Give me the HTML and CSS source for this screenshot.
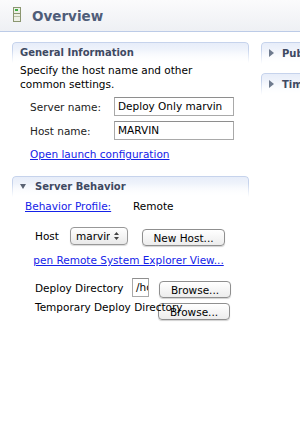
FILE: index.html
```html
<!DOCTYPE html>
<html lang="en">

<head>
  <meta charset="UTF-8" />
  <title>Overview</title>
  <link rel="stylesheet" href="styles.css">
</head>

<body>

  <div class="header">
    <svg class="server-icon" width="8" height="15" viewBox="0 0 8 15">
      <rect x="0.5" y="0.5" width="7" height="14" fill="#eef0e6" stroke="#8b9670" />
      <rect x="2" y="2" width="3" height="2" fill="#3cb043" />
      <line x1="1" y1="6.5" x2="7" y2="6.5" stroke="#8b9670" />
      <line x1="1" y1="9.5" x2="7" y2="9.5" stroke="#b8bfa6" />
    </svg>
    <h1 class="title">Overview</h1>
  </div>

  <div class="page">
    <div class="left">

      <div class="section">
        <div class="sec-head">General Information</div>
        <p class="intro">Specify the host name and other common settings.</p>
        <div class="form-row">
          <label class="row-label">Server name:</label>
          <div class="textbox">Deploy Only marvin</div>
        </div>
        <div class="form-row">
          <label class="row-label">Host name:</label>
          <div class="textbox">MARVIN</div>
        </div>
        <a class="link launch" href="#">Open launch configuration</a>
      </div>

      <div class="section behavior">
        <div class="sec-head"><span class="tri-down"></span>Server Behavior</div>
        <div class="profile-row">
          <a class="link profile-link" href="#">Behavior Profile:</a>
          <span>Remote</span>
        </div>
        <div class="host-row">
          <span class="host-label">Host</span>
          <div class="popup"><span class="popup-text">marvin</span><span class="popup-arrows">
              <svg width="5" height="8" viewBox="0 0 5 8">
                <path d="M0 3 L2.5 0 L5 3 Z M0 5 L2.5 8 L5 5 Z" fill="#444" />
              </svg></span></div>
          <button class="mac-btn new-host">New Host...</button>
        </div>
        <div class="rse-clip">
          <a class="link rse-link" href="#">Open Remote System Explorer View...</a>
        </div>
        <div class="dir-row">
          <span class="dir-label">Deploy Directory</span>
          <div class="textbox small">/home</div>
          <button class="mac-btn browse">Browse...</button>
        </div>
        <div class="dir-row temp">
          <span class="dir-label">Temporary Deploy Directory</span>
          <button class="mac-btn browse">Browse...</button>
        </div>
      </div>

    </div>

    <div class="right">
      <div class="section side">
        <div class="sec-head"><span class="tri-right"></span>Publishing</div>
      </div>
      <div class="section side">
        <div class="sec-head"><span class="tri-right"></span>Timeouts</div>
      </div>
    </div>
  </div>

</body>

</html>
```

FILE: styles.css
```css
body {
  margin: 0;
  font-family: "DejaVu Sans", sans-serif;
  font-size: 10.5px;
  color: #000;
  background: #fff;
  width: 300px;
  height: 430px;
  overflow: hidden;
}

.header {
  height: 31px;
  border-bottom: 1px solid #bccbe7;
  background: linear-gradient(#fbfbfc, #eef0f4);
  display: flex;
  align-items: center;
  padding-left: 13px;
}

.server-icon {
  margin-top: -2px;
}

.title {
  margin: 0 0 0 11px;
  font-size: 13.5px;
  font-weight: bold;
  color: #4f5d79;
}

.page {
  display: flex;
  padding: 10px 0 0 12px;
}

.left {
  width: 237px;
  flex-shrink: 0;
}

.right {
  margin-left: 12px;
  flex: 1;
  min-width: 0;
}

.section {
  display: flex;
  flex-direction: column;
}

.sec-head {
  position: relative;
  z-index: 0;
  height: 21px;
  display: flex;
  align-items: center;
  padding-left: 8px;
  font-size: 10px;
  font-weight: bold;
  color: #3e4962;
  white-space: nowrap;
}

/* faded frame round the section title */
.sec-head::before {
  content: '';
  position: absolute;
  inset: 0;
  z-index: -1;
  border: 1px solid #c6d3ec;
  border-bottom: none;
  border-radius: 4px 4px 0 0;
  background: linear-gradient(#e7edf9, #ffffff);
  -webkit-mask-image: linear-gradient(#000 35%, transparent);
  mask-image: linear-gradient(#000 35%, transparent);
}

.intro {
  margin: 0;
  padding: 0 10px 0 8px;
  line-height: 14px;
}

.form-row {
  display: flex;
  align-items: center;
  margin-top: 5px;
  padding-left: 18px;
}

.intro+.form-row {
  margin-top: 6px;
}

.row-label {
  width: 84px;
  color: #222;
}

.textbox {
  width: 115px;
  height: 17px;
  line-height: 17px;
  padding-left: 3px;
  border: 1px solid #a9a9a9;
  border-top-color: #8e8e8e;
  white-space: nowrap;
  overflow: hidden;
}

.textbox.small {
  width: 12px;
}

.link {
  color: #1522e8;
  text-decoration: underline;
}

.launch {
  margin: 7px 0 0 18px;
  line-height: 14px;
}

.behavior {
  margin-top: 15px;
}

.tri-down {
  width: 0;
  height: 0;
  border-left: 3.5px solid transparent;
  border-right: 3.5px solid transparent;
  border-top: 5px solid #5b6373;
  margin-right: 9px;
}

.tri-right {
  width: 0;
  height: 0;
  border-top: 4px solid transparent;
  border-bottom: 4px solid transparent;
  border-left: 5px solid #6f7b8e;
  margin-right: 8px;
}

.profile-row {
  display: flex;
  margin-top: 2px;
  padding-left: 13px;
  line-height: 14px;
}

.profile-link {
  width: 108px;
}

.host-row {
  display: flex;
  align-items: center;
  margin-top: 12px;
  padding-left: 23px;
}

.host-label {
  width: 35px;
}

.popup {
  width: 51px;
  height: 16px;
  padding-left: 5px;
  border: 1px solid #989898;
  border-radius: 4px;
  background: linear-gradient(#ffffff, #e9e9e9);
  box-shadow: 0 1px 1px rgba(0, 0, 0, 0.15);
  display: flex;
  align-items: center;
  white-space: nowrap;
}

.popup-text {
  width: 34px;
  overflow: hidden;
}

.popup-arrows {
  margin-left: 4px;
  display: flex;
  align-items: center;
}

.mac-btn {
  font-family: inherit;
  font-size: 10.5px;
  color: #000;
  height: 17px;
  padding: 0;
  border: 1px solid #8f8f8f;
  border-radius: 4px;
  background: linear-gradient(#ffffff, #ececec);
  box-shadow: 0 1px 1px rgba(0, 0, 0, 0.18);
}

.new-host {
  width: 83px;
  margin-left: 14px;
  margin-top: 4px;
}

.rse-clip {
  margin: 7px 0 0 21px;
  overflow: hidden;
  white-space: nowrap;
  line-height: 14px;
}

.rse-link {
  display: inline-block;
  margin-left: -8px;
}

.dir-row {
  display: flex;
  align-items: center;
  margin-top: 10px;
  padding-left: 23px;
}

.dir-label {
  width: 97px;
  flex-shrink: 0;
  white-space: nowrap;
  position: relative;
  z-index: 1;
}

.dir-row .browse {
  width: 72px;
  margin-left: 10px;
  margin-top: 4px;
}

.dir-row.temp {
  margin-top: 3px;
  align-items: flex-start;
}

.dir-row.temp .browse {
  margin-left: 26px;
  margin-top: 2px;
}

.side {
  width: 200px;
}

.side+.side {
  margin-top: 9px;
}

.side .sec-head {
  height: 22px;
}
```
